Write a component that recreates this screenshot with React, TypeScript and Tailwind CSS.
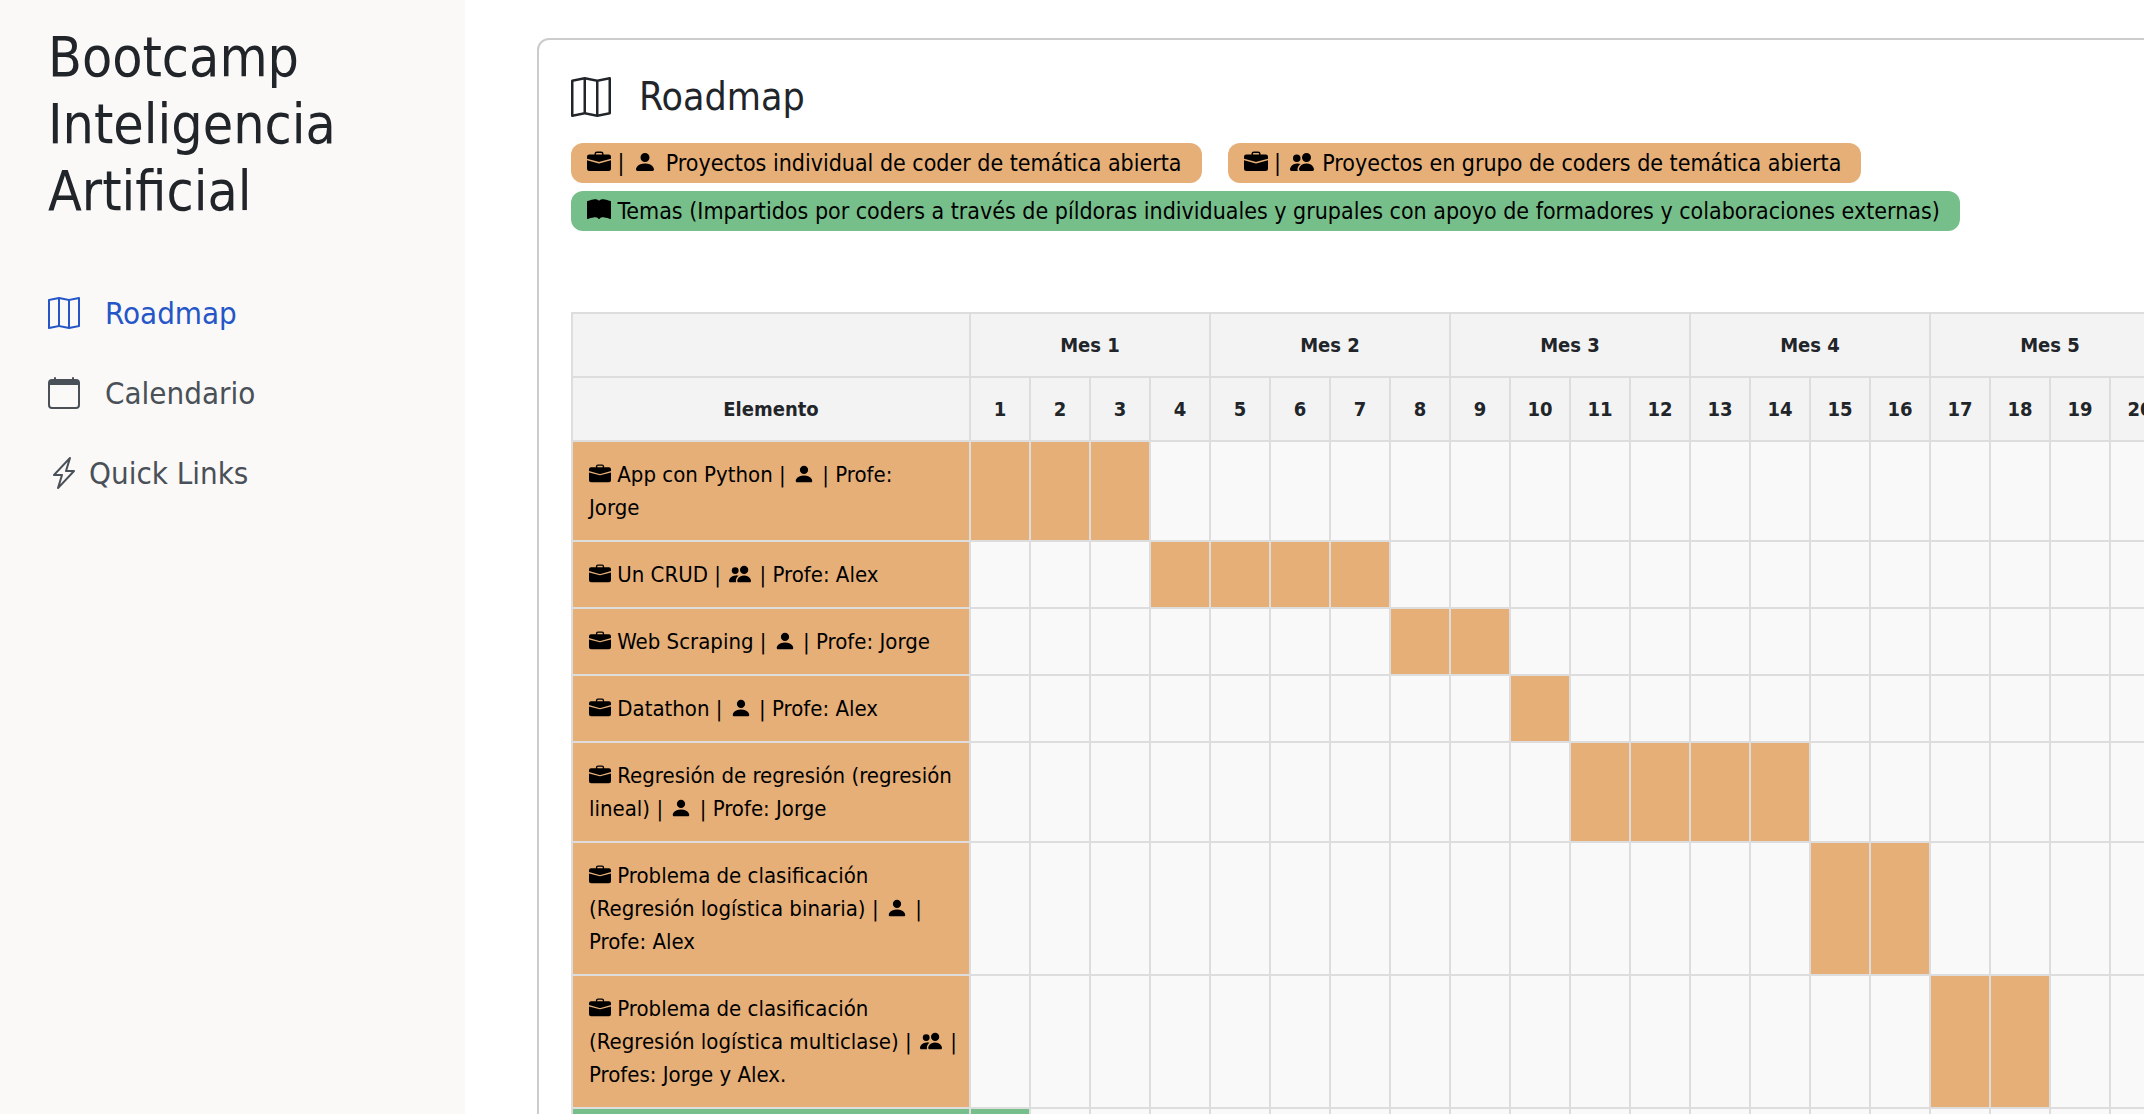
import React from "react";
import {
  BsMap,
  BsCalendar,
  BsLightningCharge,
  BsBriefcaseFill,
  BsPersonFill,
  BsPeopleFill,
  BsBookFill,
} from "react-icons/bs";

type Tone = "project" | "topic";

type Row = {
  title: string;
  who?: "solo" | "group";
  teacher: string;
  tone: Tone;
  from: number;
  to: number;
};

const WEEKS = Array.from({ length: 24 }, (_, i) => i + 1);
const MONTHS = [1, 2, 3, 4, 5, 6];

const ROWS: Row[] = [
  { title: "App con Python", who: "solo", teacher: "Profe:\nJorge", tone: "project", from: 1, to: 3 },
  { title: "Un CRUD", who: "group", teacher: "Profe: Alex", tone: "project", from: 4, to: 7 },
  { title: "Web Scraping", who: "solo", teacher: "Profe: Jorge", tone: "project", from: 8, to: 9 },
  { title: "Datathon", who: "solo", teacher: "Profe: Alex", tone: "project", from: 10, to: 10 },
  { title: "Regresión de regresión (regresión lineal)", who: "solo", teacher: "Profe: Jorge", tone: "project", from: 11, to: 14 },
  { title: "Problema de clasificación (Regresión logística binaria)", who: "solo", teacher: "Profe: Alex", tone: "project", from: 15, to: 16 },
  { title: "Problema de clasificación (Regresión logística multiclase)", who: "group", teacher: "Profes: Jorge y Alex.", tone: "project", from: 17, to: 18 },
  { title: "", teacher: "", tone: "topic", from: 1, to: 1 },
];

const TONES: Record<Tone, string> = {
  project: "bg-[#e6af78]",
  topic: "bg-[#77bf8a]",
};

const icon = "inline-block size-[1em] align-[-0.125em]";
const badgeIcon = "inline-block size-6 align-[-0.125em]";

function NavItem({ label, active, children, tight }: { label: string; active?: boolean; tight?: boolean; children: React.ReactNode }) {
  return (
    <li>
      <a
        href="#"
        className={`flex h-20 items-center text-[31px] leading-[48px] ${tight ? "gap-[9px]" : "gap-[25px]"} ${active ? "text-[#2456c7]" : "text-[#495057]"}`}
      >
        {children}
        <span>{label}</span>
      </a>
    </li>
  );
}

function Badge({ tone, children }: { tone: Tone; children: React.ReactNode }) {
  return (
    <span className={`h-10 rounded-xl pr-5 pl-4 text-[23px] leading-10 whitespace-nowrap text-black ${TONES[tone]}`}>
      {children}
    </span>
  );
}

function Roadmap() {
  const th = "h-16 border-2 border-[#ddd] bg-[#f3f3f3] p-0 text-center text-xl font-bold";
  return (
    <table className="w-[1840px] table-fixed border-collapse">
      <colgroup>
        <col className="w-[398px]" />
        {WEEKS.map((w) => (
          <col key={w} className="w-[60px]" />
        ))}
      </colgroup>
      <thead>
        <tr>
          <th className={th} />
          {MONTHS.map((m) => (
            <th key={m} colSpan={4} scope="colgroup" className={th}>
              Mes {m}
            </th>
          ))}
        </tr>
        <tr>
          <th scope="col" className={th}>Elemento</th>
          {WEEKS.map((w) => (
            <th key={w} scope="col" className={th}>
              {w}
            </th>
          ))}
        </tr>
      </thead>
      <tbody>
        {ROWS.map((r, i) => (
          <tr key={i}>
            <td className={`border-2 border-[#ddd] py-4 pr-2 pl-4 text-[22px] leading-[33px] text-black ${TONES[r.tone]}`}>
              {r.who ? (
                <>
                  <BsBriefcaseFill className={icon} /> {r.title} |{" "}
                  {r.who === "solo" ? <BsPersonFill className={`${icon} mx-px`} /> : <BsPeopleFill className={`${icon} mx-0.5`} />} |{" "}
                  <span className="whitespace-pre-line">{r.teacher}</span>
                </>
              ) : (
                <BsBookFill className={icon} />
              )}
            </td>
            {WEEKS.map((w) => (
              <td
                key={w}
                className={`border-2 border-[#ddd] ${w >= r.from && w <= r.to ? TONES[r.tone] : "bg-[#f9f9f9]"}`}
              />
            ))}
          </tr>
        ))}
      </tbody>
    </table>
  );
}

export default function App() {
  return (
    <div className="flex h-screen overflow-hidden bg-white font-['DejaVu_Sans_Condensed','Noto_Sans',sans-serif] text-[#212529]">
      <aside className="w-[465px] shrink-0 bg-[#faf9f8] px-12 pt-6">
        <h1 className="w-80 text-[55px] leading-[67px]">Bootcamp Inteligencia Artificial</h1>
        <nav className="mt-12">
          <ul>
            <NavItem label="Roadmap" active>
              <BsMap className="size-8" />
            </NavItem>
            <NavItem label="Calendario">
              <BsCalendar className="size-8" />
            </NavItem>
            <NavItem label="Quick Links" tight>
              <BsLightningCharge className="size-8" />
            </NavItem>
          </ul>
        </nav>
      </aside>
      <main className="min-w-0 flex-1 overflow-hidden pt-[38px] pl-18">
        <section className="w-max rounded-xl border-2 border-[#ccc] p-8">
          <h2 className="flex h-[50px] items-center gap-7 text-[39px] leading-[48px]">
            <BsMap className="size-10" />
            Roadmap
          </h2>
          <div className="mt-[21px] flex flex-col items-start gap-2">
            <div className="flex gap-[26px]">
              <Badge tone="project">
                <BsBriefcaseFill className={badgeIcon} /> | <BsPersonFill className={`${badgeIcon} mx-0.5`} /> Proyectos individual de coder de temática abierta
              </Badge>
              <Badge tone="project">
                <BsBriefcaseFill className={badgeIcon} /> | <BsPeopleFill className={`${badgeIcon} mx-0.5`} /> Proyectos en grupo de coders de temática abierta
              </Badge>
            </div>
            <Badge tone="topic">
              <BsBookFill className={badgeIcon} /> Temas (Impartidos por coders a través de píldoras individuales y grupales con apoyo de formadores y colaboraciones externas)
            </Badge>
          </div>
          <div className="mt-[81px]">
            <Roadmap />
          </div>
        </section>
      </main>
    </div>
  );
}
